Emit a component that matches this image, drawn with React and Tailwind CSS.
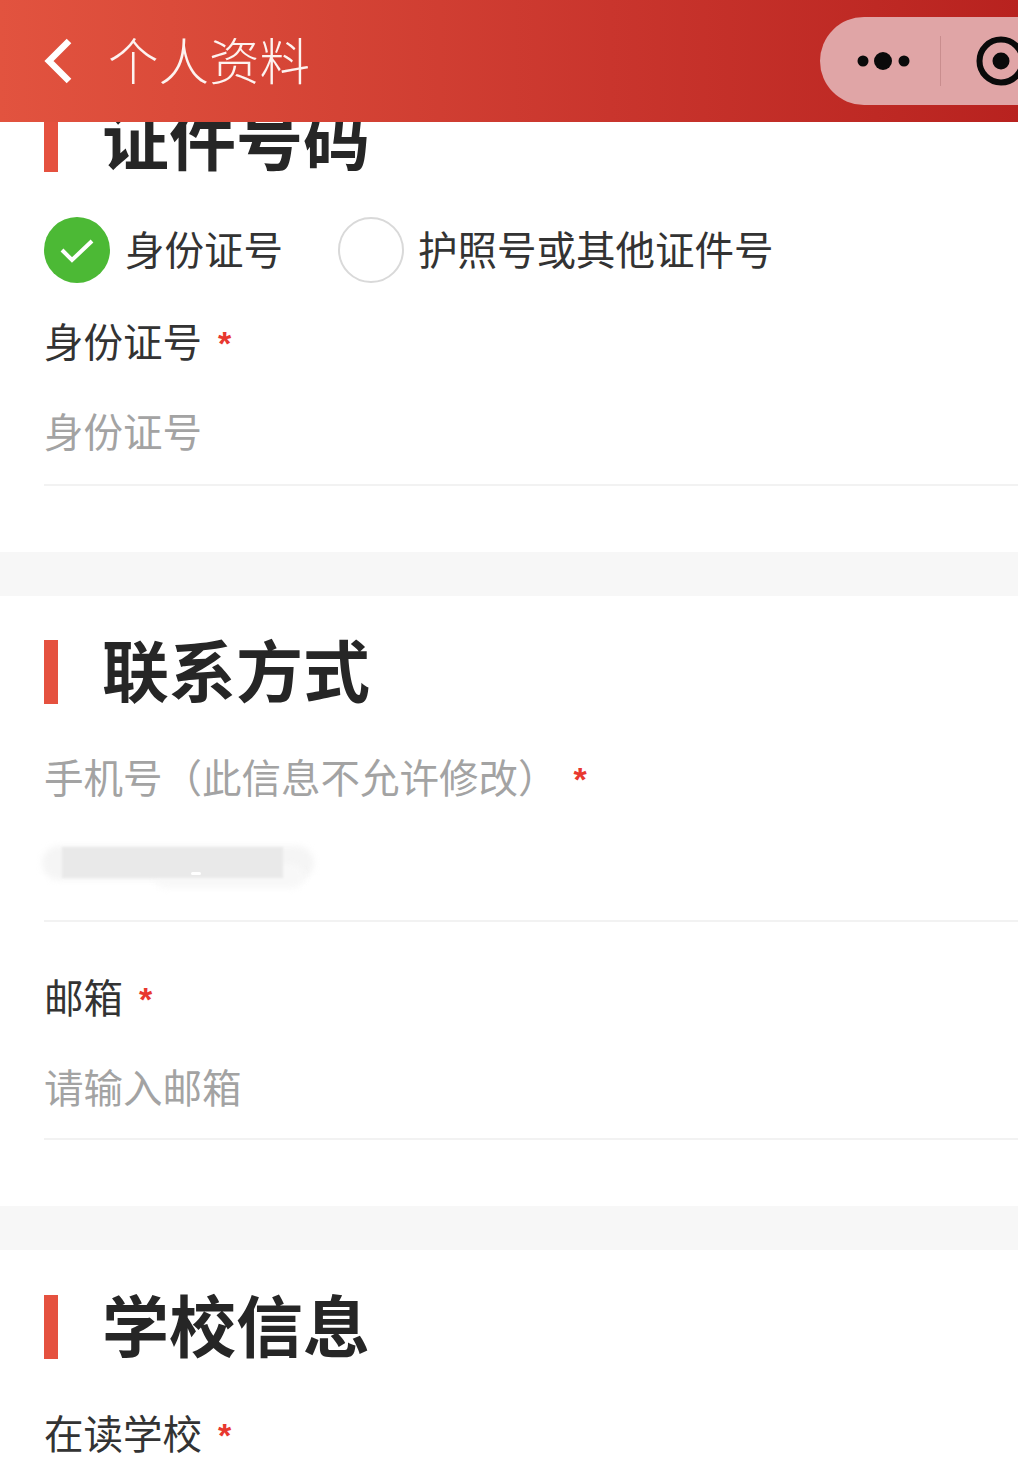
import React from 'react';

const font = { cjk: 'font-["Noto_Sans_CJK_SC","Noto_Sans",sans-serif]' };

function Star() {
  return <span className='font-["Liberation_Sans",sans-serif] text-[34px] leading-none font-bold text-[#e8382f] translate-y-[3px]'>*</span>;
}

function SectionTitle({ children }) {
  return (
    <div className="flex items-center h-[64px]">
      <div className="w-[14px] h-[64px] bg-[#e5513f]" />
      <h2 className="ml-[44px] pb-[8px] text-[67px] leading-[64px] font-bold text-[#262626]">{children}</h2>
    </div>
  );
}

function Label({ text, muted }) {
  return (
    <div className={`flex items-center h-[60px] pb-[5px] text-[39.5px] ${muted ? 'text-[#a3a3a3]' : 'text-[#333333]'}`}>
      <span>{text}</span>
      <span className="flex ml-[16px]"><Star /></span>
    </div>
  );
}

function Placeholder({ children }) {
  return <div className="flex items-center h-[60px] pb-[5px] text-[39.5px] text-[#a3a3a3]">{children}</div>;
}

function Band() {
  return <div className="h-[44px] bg-[#f7f7f7]" />;
}

export default function App() {
  return (
    <div className={`${font.cjk} w-[1018px] h-[1478px] overflow-hidden bg-white`}>
      <header className="relative z-10 h-[122px] flex items-center justify-between bg-gradient-to-r from-[#e2533f] via-[#c9352d] via-60% to-[#b8221f]">
        <div className="flex items-center text-white">
          <svg className="ml-[44px]" width="30" height="46" viewBox="0 0 30 46" fill="none">
            <path d="M25 3 L5 23 L25 43" stroke="#fff" strokeWidth="6.5" strokeLinejoin="miter" />
          </svg>
          <span className="ml-[34px] mb-[5px] text-[50.5px] font-light leading-none text-[#fdf3f0]">个人资料</span>
        </div>
        <div className="relative shrink-0 -mr-[22px] w-[220px] h-[88px] rounded-l-[44px] bg-[#e0a5a6] flex items-center">
          <svg className="ml-[37px]" width="54" height="20" viewBox="0 0 54 20">
            <circle cx="6" cy="10" r="5.5" fill="#0a0a0a" />
            <circle cx="26" cy="10" r="9" fill="#0a0a0a" />
            <circle cx="47" cy="10" r="5.5" fill="#0a0a0a" />
          </svg>
          <div className="ml-[29px] w-px h-[50px] bg-[#c98d8e]" />
          <svg className="ml-[35px]" width="50" height="50" viewBox="0 0 50 50" fill="none">
            <circle cx="25" cy="25" r="21.5" stroke="#0a0a0a" strokeWidth="6" />
            <circle cx="25" cy="25" r="8.5" fill="#0a0a0a" />
          </svg>
        </div>
      </header>

      <section className="-mt-[14px] pl-[44px]">
        <SectionTitle>证件号码</SectionTitle>
        <div className="mt-[45px] flex items-center h-[66px]">
          <div className="w-[66px] h-[66px] rounded-full bg-[#4cb935] flex items-center justify-center">
            <svg width="36" height="28" viewBox="0 0 36 28" fill="none">
              <path d="M3 14 L13 24 L33 5" stroke="#fff" strokeWidth="4" />
            </svg>
          </div>
          <span className="ml-[15px] pb-[4px] text-[39.5px] text-[#333333]">身份证号</span>
          <div className="ml-[55px] w-[66px] h-[66px] rounded-full border-2 border-[#d9d9d9]" />
          <span className="ml-[14px] pb-[4px] text-[39.5px] text-[#333333]">护照号或其他证件号</span>
        </div>
        <div className="mt-[29px]"><Label text="身份证号" /></div>
        <div className="mt-[30px]"><Placeholder>身份证号</Placeholder></div>
        <div className="mt-[22px] h-[2px] bg-[#f2f2f2]" />
        <div className="h-[66px]" />
      </section>
      <Band />

      <section className="pt-[44px] pl-[44px]">
        <SectionTitle>联系方式</SectionTitle>
        <div className="mt-[44px]"><Label text="手机号（此信息不允许修改）" muted /></div>
        <div className="relative mt-[26px] h-[60px]">
          <div className="absolute left-[-2px] top-[12px] w-[272px] h-[34px] rounded-full bg-[#f5f5f5] blur-[3px]" />
          <div className="absolute left-[110px] top-[30px] w-[150px] h-[24px] rounded-full bg-[#f8f8f8] blur-[3px]" />
          <div className="absolute left-[18px] top-[13px] w-[221px] h-[31px] bg-[#e9e9e9] blur-[1px]" />
          <div className="absolute left-[147px] top-[38px] w-[10px] h-[3px] rounded-full bg-white" />
        </div>
        <div className="mt-[26px] h-[2px] bg-[#f2f2f2]" />
        <div className="mt-[46px]"><Label text="邮箱" /></div>
        <div className="mt-[30px]"><Placeholder>请输入邮箱</Placeholder></div>
        <div className="mt-[20px] h-[2px] bg-[#f2f2f2]" />
        <div className="h-[66px]" />
      </section>
      <Band />

      <section className="pt-[45px] pl-[44px]">
        <SectionTitle>学校信息</SectionTitle>
        <div className="mt-[45px]"><Label text="在读学校" /></div>
      </section>
    </div>
  );
}
